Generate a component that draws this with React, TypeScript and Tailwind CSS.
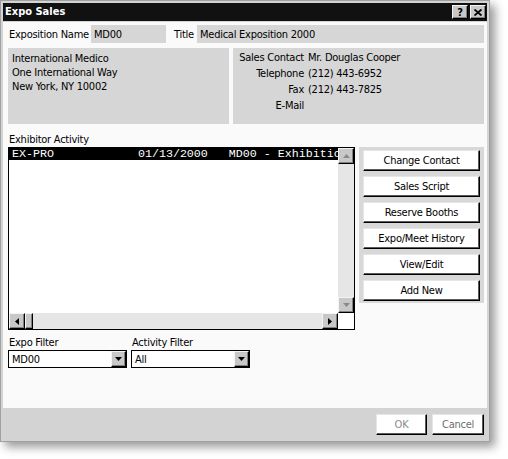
import React from "react";

const Bevel = ({ className = "", children }: { className?: string; children?: React.ReactNode }) => (
  <div
    className={`flex items-center justify-center bg-[#c8c8c8] border-t border-l border-t-[#f4f4f4] border-l-[#f4f4f4] border-b border-r border-b-black border-r-black shadow-[inset_-1px_-1px_0_#808080] ${className}`}
  >
    {children}
  </div>
);

const Tri = ({ dir, color }: { dir: "up" | "down" | "left" | "right"; color: string }) => {
  const pts =
    dir === "up"
      ? "0,4 7,4 3.5,0"
      : dir === "down"
      ? "0,0 7,0 3.5,4"
      : dir === "left"
      ? "4,0 4,7 0,3.5"
      : "0,0 0,7 4,3.5";
  const w = dir === "up" || dir === "down" ? 7 : 4;
  const h = dir === "up" || dir === "down" ? 4 : 7;
  return (
    <svg width={w} height={h} viewBox={`0 0 ${w} ${h}`}>
      <polygon points={pts} fill={color} />
    </svg>
  );
};

const Btn = ({ children, className = "" }: { children: React.ReactNode; className?: string }) => (
  <div
    className={`h-[21px] pt-px flex items-center justify-center bg-white border-t border-l border-t-[#e6e6e6] border-l-[#e6e6e6] border-b border-r border-b-black border-r-black shadow-[inset_-1px_-1px_0_#5a5a5a] ${className}`}
  >
    {children}
  </div>
);

const Select = ({ value }: { value: string }) => (
  <div className="w-[119px] h-[18px] border border-black bg-white flex items-center">
    <div className="flex-1 pl-[3px] pt-px">{value}</div>
    <Bevel className="w-[15px] h-[16px]">
      <Tri dir="down" color="#000" />
    </Bevel>
  </div>
);

export default function App() {
  return (
    <div className="w-[508px] h-[459px] bg-white font-['DejaVu_Sans_Condensed','Liberation_Sans',Arial,sans-serif] text-[11px] tracking-[-0.25px] leading-[14px] text-black whitespace-nowrap">
      <div className="w-[490px] h-[442px] border border-[#a0a0a0] bg-[#d4d4d4] p-[2px] flex flex-col shadow-[5px_5px_9px_rgba(0,0,0,0.4)]">
        {/* Title bar */}
        <div className="h-[18px] bg-[#111111] flex items-center pl-[2px] pr-[1px]">
          <span className="text-white font-bold text-[11px] tracking-normal">Expo Sales</span>
          <div className="ml-auto flex gap-[2px]">
            <Bevel className="w-[16px] h-[14px]">
              <span className="font-bold text-[11px] leading-[11px] tracking-normal">?</span>
            </Bevel>
            <Bevel className="w-[16px] h-[14px]">
              <svg width="8" height="7" viewBox="0 0 8 7">
                <path d="M0.5 0.5 L7.5 6.5 M7.5 0.5 L0.5 6.5" stroke="#000" strokeWidth="1.8" />
              </svg>
            </Bevel>
          </div>
        </div>

        {/* Body */}
        <div className="mt-px flex-1 bg-[#fafafa] flex flex-col">
          <div className="pl-[5px] pr-[3px] pt-[3px]">
            {/* Row 1 */}
            <div className="flex items-center h-[18px]">
              <div className="w-[83px] pl-px pt-px">Exposition Name</div>
              <div className="w-[75px] h-full bg-[#d6d6d6] pl-[3px] pt-px flex items-center">MD00</div>
              <div className="w-[31px] pl-[8px] pt-px">Title</div>
              <div className="flex-1 h-full bg-[#d6d6d6] pl-[3px] pt-px flex items-center">Medical Exposition 2000</div>
            </div>

            {/* Row 2 */}
            <div className="mt-[5px] flex gap-[4px] h-[76px]">
              <div className="w-[221px] bg-[#d6d6d6] pl-[4px] pt-[4px]">
                <div>International Medico</div>
                <div>One International Way</div>
                <div>New York, NY 10002</div>
              </div>
              <div className="flex-1 bg-[#d6d6d6] pt-[2px] grid grid-cols-[71px_1fr] auto-rows-[16px] gap-x-[4px] content-start items-center">
                <div className="text-right">Sales Contact</div>
                <div>Mr. Douglas Cooper</div>
                <div className="text-right">Telephone</div>
                <div>(212) 443-6952</div>
                <div className="text-right">Fax</div>
                <div>(212) 443-7825</div>
                <div className="text-right">E-Mail</div>
                <div></div>
              </div>
            </div>

            <div className="mt-[9px] pl-px">Exhibitor Activity</div>

            {/* Main */}
            <div className="flex gap-[4px] items-start">
              <div className="w-[347px] h-[183px] border border-black flex flex-col">
                <div className="flex flex-1 min-h-0">
                  <div className="flex-1 bg-white overflow-hidden">
                    <div className="h-[12px] bg-black text-white font-['Liberation_Mono',monospace] text-[11.67px] leading-[12px] tracking-normal whitespace-pre pl-[3px] overflow-hidden">
                      {"EX-PRO            01/13/2000   MD00 - Exhibition"}
                    </div>
                  </div>
                  <div className="w-[16px] flex flex-col bg-[#e6e6e6]">
                    <Bevel className="w-[16px] h-[16px]">
                      <Tri dir="up" color="#8a8a8a" />
                    </Bevel>
                    <div className="flex-1" />
                    <Bevel className="w-[16px] h-[16px]">
                      <Tri dir="down" color="#8a8a8a" />
                    </Bevel>
                  </div>
                </div>
                <div className="h-[16px] flex bg-[#e6e6e6]">
                  <Bevel className="w-[16px] h-[16px]">
                    <Tri dir="left" color="#000" />
                  </Bevel>
                  <Bevel className="w-[8px] h-[16px]" />
                  <div className="flex-1" />
                  <Bevel className="w-[16px] h-[16px]">
                    <Tri dir="right" color="#000" />
                  </Bevel>
                  <div className="w-[16px] bg-white" />
                </div>
              </div>

              <div className="w-[125px] bg-[#d8d8d8] pt-[3px] pb-[2px] px-[4px] flex flex-col gap-[5px]">
                <Btn>Change Contact</Btn>
                <Btn>Sales Script</Btn>
                <Btn>Reserve Booths</Btn>
                <Btn>Expo/Meet History</Btn>
                <Btn>View/Edit</Btn>
                <Btn>Add New</Btn>
              </div>
            </div>

            {/* Filters */}
            <div className="mt-[6px] flex gap-[4px]">
              <div className="flex flex-col">
                <div className="pl-px">Expo Filter</div>
                <Select value="MD00" />
              </div>
              <div className="flex flex-col">
                <div className="pl-px">Activity Filter</div>
                <Select value="All" />
              </div>
            </div>
          </div>

          <div className="flex-1" />

          {/* Bottom bar */}
          <div className="h-[31px] bg-[#d3d3d3] flex justify-end items-start pt-[6px] pr-[3px] gap-[5px]">
            <Btn className="w-[51px] text-[#8a8a8a]">OK</Btn>
            <Btn className="w-[52px] text-[#707070]">Cancel</Btn>
          </div>
        </div>
      </div>
    </div>
  );
}
